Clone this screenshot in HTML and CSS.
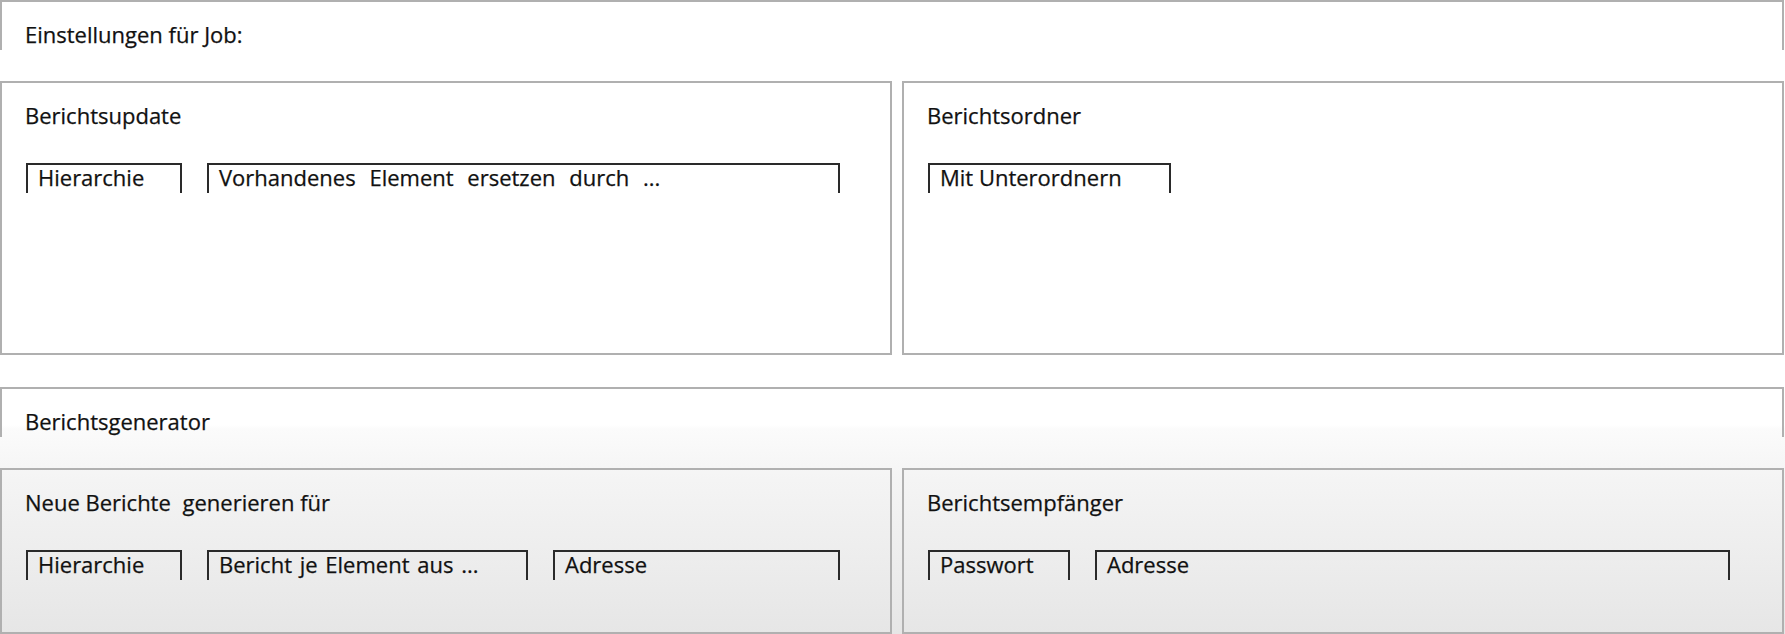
FILE: index.html
```html
<!DOCTYPE html>
<html lang="de">
<head>
<meta charset="UTF-8">
<meta name="viewport" content="width=device-width, initial-scale=1.0">
<title>Einstellungen für Job</title>
<link rel="stylesheet" href="styles.css">
</head>
<body>
<div class="page">
  <section class="group">
    <div class="group-head">Einstellungen für Job:</div>
    <div class="panels">
      <div class="panel panel-tall">
        <div class="panel-title">Berichtsupdate</div>
        <div class="fields">
          <div class="field w-hier">Hierarchie</div>
          <div class="field w-replace wide-words">Vorhandenes Element ersetzen durch ...</div>
        </div>
      </div>
      <div class="panel panel-tall">
        <div class="panel-title">Berichtsordner</div>
        <div class="fields">
          <div class="field w-sub">Mit Unterordnern</div>
        </div>
      </div>
    </div>
  </section>

  <section class="group group-gen">
    <div class="group-head">Berichtsgenerator</div>
    <div class="panels">
      <div class="panel panel-short">
        <div class="panel-title">Neue Berichte <span class="gap-word">generieren</span> für</div>
        <div class="fields">
          <div class="field w-hier">Hierarchie</div>
          <div class="field w-each">Bericht je Element aus ...</div>
          <div class="field w-addr">Adresse</div>
        </div>
      </div>
      <div class="panel panel-short">
        <div class="panel-title">Berichtsempfänger</div>
        <div class="fields">
          <div class="field w-pass">Passwort</div>
          <div class="field w-addr-long">Adresse</div>
        </div>
      </div>
    </div>
  </section>
</div>
</body>
</html>
```

FILE: styles.css
```css
html, body {
  margin: 0;
  padding: 0;
  background: #fff;
}
body {
  font-family: "Open Sans", "Noto Sans", sans-serif;
  font-size: 22px;
  color: #111;
  -webkit-text-stroke: 0.25px #111;
  height: 634px;
  overflow: hidden;
}
.page {
  width: 1785px;
}
.group {
  width: 1784px;
}
.group-gen {
  margin-top: 32px;
  padding-right: 1px;
  height: 247px;
  background: linear-gradient(to bottom, #fff 0, #fff 38px, #fbfbfb 42px, #f4f4f4 93px, #e6e6e6 100%);
}
.group-head {
  box-sizing: border-box;
  height: 50px;
  border: 2px solid #b0b0b0;
  border-bottom: none;
  padding: 17px 0 0 23px;
  line-height: 30px;
  margin-bottom: 31px;
}
.panels {
  display: grid;
  grid-template-columns: 892px 1fr;
  column-gap: 10px;
}
.panel {
  box-sizing: border-box;
  border: 2px solid #b0b0b0;
  padding: 17px 0 0 24px;
}
.panel-tall {
  height: 274px;
}
.panel-short {
  height: 166px;
}
.panel-title {
  line-height: 30px;
  margin-left: -1px;
}
.gap-word {
  margin-left: 6px;
}
.fields {
  display: flex;
  gap: 25px;
  margin-top: 33px;
}
.field {
  box-sizing: border-box;
  height: 30px;
  border: 2px solid #2a2a2a;
  border-bottom: none;
  padding: 0 0 4px 10px;
  line-height: 24px;
  white-space: nowrap;
  overflow: hidden;
}
.wide-words {
  word-spacing: 8px;
}
.w-hier { width: 156px; }
.w-replace { width: 633px; }
.w-sub { width: 243px; }
.w-each { width: 321px; word-spacing: 2px; }
.w-addr { width: 287px; }
.w-pass { width: 142px; }
.w-addr-long { width: 635px; }
```
